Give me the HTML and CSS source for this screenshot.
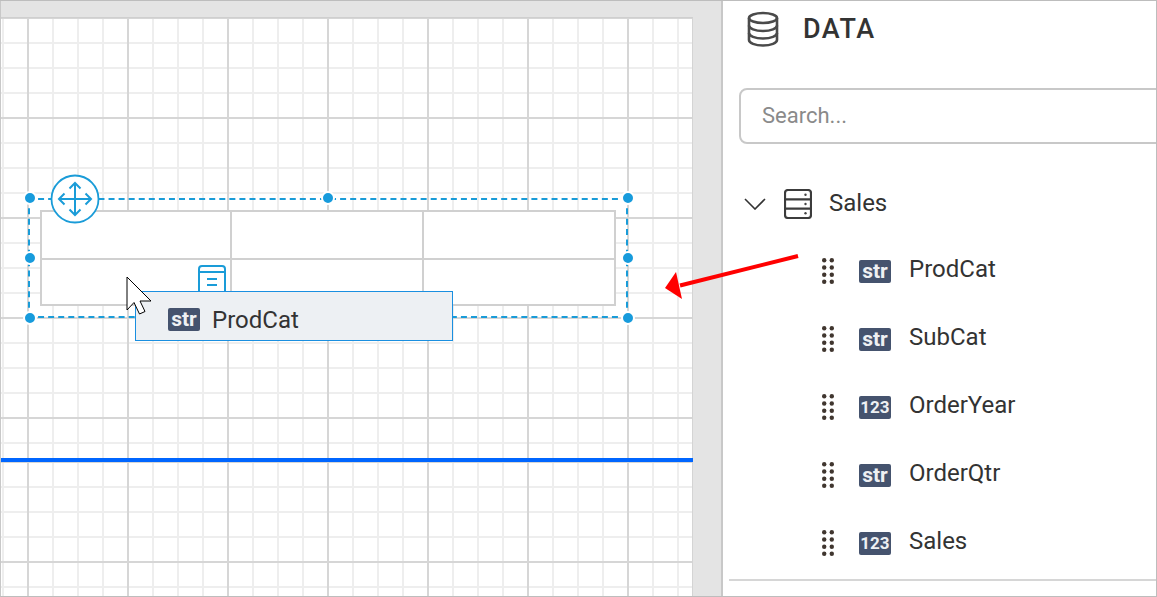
FILE: index.html
```html
<!DOCTYPE html>
<html lang="en">

<head>
    <meta charset="UTF-8">
    <meta name="viewport" content="width=device-width, initial-scale=1.0">
    <link rel="stylesheet" href="styles.css">
    <title>Report Designer</title>
</head>

<body>

    <svg class="defs" width="0" height="0">
        <symbol id="dots" viewBox="0 0 12 26">
            <circle cx="2.200" cy="2.200" r="2.200" />
            <circle cx="9.800" cy="2.200" r="2.200" />
            <circle cx="2.200" cy="9.500" r="2.200" />
            <circle cx="9.800" cy="9.500" r="2.200" />
            <circle cx="2.200" cy="16.700" r="2.200" />
            <circle cx="9.800" cy="16.700" r="2.200" />
            <circle cx="2.200" cy="23.800" r="2.200" />
            <circle cx="9.800" cy="23.800" r="2.200" />
        </symbol>
    </svg>

    <div class="frame">

        <div class="stage">
            <div class="canvas">
                <div class="band band-top"></div>
                <div class="band-line"></div>
                <div class="band band-bottom"></div>

                <!-- table item on the canvas -->
                <div class="selection"></div>
                <span class="handle h1"></span>
                <span class="handle h2"></span>
                <span class="handle h3"></span>
                <span class="handle h4"></span>
                <span class="handle h5"></span>
                <span class="handle h6"></span>
                <span class="handle h7"></span>

                <div class="table-item">
                    <div class="cell"></div>
                    <div class="cell"></div>
                    <div class="cell"></div>
                    <div class="cell"></div>
                    <div class="cell"></div>
                    <div class="cell"></div>
                </div>

                <svg class="move-icon" width="50" height="50" viewBox="0 0 50 50">
                    <circle cx="25" cy="25" r="23.500" fill="#fff" stroke="#1a9cd8" stroke-width="1.800" />
                    <path d="M25 9V41M9 25H41M19.500 14.500L25 9L30.500 14.500M19.500 35.500L25 41L30.500 35.500M14.500 19.500L9 25L14.500 30.500M35.500 19.500L41 25L35.500 30.500"
                        fill="none" stroke="#1a9cd8" stroke-width="2" />
                </svg>

                <svg class="cell-icon" width="28" height="30" viewBox="0 0 28 30">
                    <rect x="1" y="1" width="26" height="28" rx="3" fill="#fff" stroke="#1a9cd8" stroke-width="2" />
                    <path d="M1 7H27M9 14H19M9 20H19" fill="none" stroke="#1a9cd8" stroke-width="2" />
                </svg>

                <div class="drag-chip">
                    <span class="badge chip-badge">str</span>
                    <span>ProdCat</span>
                </div>

                <svg class="cursor" width="28" height="40" viewBox="0 0 28 40">
                    <path d="M1 1V34L8 26.500L13.500 38L19 35.500L14 25H25Z" fill="#fff" stroke="#000" stroke-width="1" />
                </svg>
            </div>
        </div>

        <div class="panel">
            <div class="panel-head">
                <svg width="32" height="36" viewBox="0 0 32 36">
                    <g fill="none" stroke="#4a4a4a" stroke-width="2.600">
                        <ellipse cx="16" cy="7" rx="14" ry="5" />
                        <path d="M2 7V29C2 32 8 34.500 16 34.500C24 34.500 30 32 30 29V7" />
                        <path d="M2 14.500C2 17.500 8 20 16 20C24 20 30 17.500 30 14.500" />
                        <path d="M2 22C2 25 8 27.500 16 27.500C24 27.500 30 25 30 22" />
                    </g>
                </svg>
                <span class="panel-title">DATA</span>
            </div>

            <input class="search" type="text" placeholder="Search...">

            <div class="tree-root">
                <svg class="chevron" width="22" height="12" viewBox="0 0 22 12">
                    <path d="M1 1L11 11L21 1" fill="none" stroke="#333" stroke-width="1.600" />
                </svg>
                <svg class="server" width="28" height="30" viewBox="0 0 28 30">
                    <rect x="1" y="1" width="26" height="28" rx="3" fill="none" stroke="#3c3c3c" stroke-width="2.200" />
                    <path d="M1 10.300H27M1 19.600H27" fill="none" stroke="#3c3c3c" stroke-width="2.200" />
                    <circle cx="21.500" cy="5.700" r="1.200" fill="#444" />
                    <circle cx="21.500" cy="15" r="1.200" fill="#444" />
                    <circle cx="21.500" cy="24.300" r="1.200" fill="#444" />
                </svg>
                <span class="field-name">Sales</span>
            </div>

            <ul class="fields">
                <li class="field">
                    <svg class="dots" width="12" height="26"><use href="#dots" /></svg>
                    <span class="badge">str</span>
                    <span class="field-name">ProdCat</span>
                </li>
                <li class="field">
                    <svg class="dots" width="12" height="26"><use href="#dots" /></svg>
                    <span class="badge">str</span>
                    <span class="field-name">SubCat</span>
                </li>
                <li class="field">
                    <svg class="dots" width="12" height="26"><use href="#dots" /></svg>
                    <span class="badge num">123</span>
                    <span class="field-name">OrderYear</span>
                </li>
                <li class="field">
                    <svg class="dots" width="12" height="26"><use href="#dots" /></svg>
                    <span class="badge">str</span>
                    <span class="field-name">OrderQtr</span>
                </li>
                <li class="field">
                    <svg class="dots" width="12" height="26"><use href="#dots" /></svg>
                    <span class="badge num">123</span>
                    <span class="field-name">Sales</span>
                </li>
            </ul>

            <div class="panel-rule"></div>
        </div>
    </div>

    <!-- annotation arrow -->
    <svg class="red-arrow" width="140" height="50" viewBox="0 0 140 50">
        <path d="M138 2L20 31.500" fill="none" stroke="#f00" stroke-width="4" />
        <path d="M5 34L16 18L22 45Z" fill="#f00" />
    </svg>

</body>

</html>
```

FILE: styles.css
```css
* {
    box-sizing: border-box;
}

body {
    margin: 0;
    position: relative;
    width: 1157px;
    height: 597px;
    overflow: hidden;
    font-family: Roboto, "Liberation Sans", sans-serif;
    color: #333;
}

.defs {
    position: absolute;
}

.frame {
    display: flex;
    width: 1157px;
    height: 597px;
    border: 1px solid #bdbdbd;
    border-left-width: 0;
}

/* left side */
.stage {
    width: 721px;
    flex: none;
    padding-top: 16px;
    background: #e4e4e4;
    border-left: 1px solid #c8c8c8;
}

.canvas {
    position: relative;
    width: 692px;
    height: 579px;
    display: flex;
    flex-direction: column;
    background: #fff;
    border-top: 1px solid #cfcfcf;
    border-right: 1px solid #d4d4d4;
}

.band {
    background-color: #fff;
    background-image:
        linear-gradient(to right, #d6d6d6 2px, transparent 2px),
        linear-gradient(to bottom, #d6d6d6 2px, transparent 2px),
        linear-gradient(to right, #eeeeee 2px, transparent 2px),
        linear-gradient(to bottom, #eeeeee 2px, transparent 2px);
    background-size: 100px 100px, 100px 100px, 25px 25px, 25px 25px;
    background-position: 26px -1px, 26px -1px, 1px -1px, 1px -1px;
}

.band-top {
    height: 440px;
}

.band-line {
    height: 4px;
    flex: none;
    margin-right: -1px;
    background: #0066ff;
}

.band-bottom {
    flex: 1;
}

.selection {
    position: absolute;
    left: 27px;
    top: 180px;
    width: 600px;
    height: 120px;
    border: 2px dashed #1a9cd8;
}

.handle {
    position: absolute;
    width: 14px;
    height: 14px;
    border-radius: 50%;
    background: #179bdc;
    border: 2px solid #fff;
}

.h1 { left: 22px; top: 173px; }
.h2 { left: 320px; top: 173px; }
.h3 { left: 620px; top: 173px; }
.h4 { left: 22px; top: 233px; }
.h5 { left: 620px; top: 233px; }
.h6 { left: 22px; top: 293px; }
.h7 { left: 620px; top: 293px; }

.table-item {
    position: absolute;
    left: 39px;
    top: 192px;
    width: 576px;
    height: 96px;
    display: grid;
    grid-template-columns: 190px 192px 1fr;
    grid-template-rows: 48px 1fr;
    background: #fff;
    border: 2px solid #d0d0d0;
}

.cell {
    border-right: 2px solid #d0d0d0;
    border-bottom: 2px solid #d0d0d0;
}

.cell:nth-child(3n) {
    border-right: 0;
}

.cell:nth-child(n+4) {
    border-bottom: 0;
}

.move-icon {
    position: absolute;
    left: 49px;
    top: 156px;
}

.cell-icon {
    position: absolute;
    left: 197px;
    top: 247px;
}

.drag-chip {
    position: absolute;
    left: 134px;
    top: 273px;
    width: 318px;
    height: 50px;
    display: flex;
    align-items: center;
    gap: 12px;
    padding-left: 32px;
    padding-top: 7px;
    font-size: 24px;
    background: #edf0f3;
    border: 1px solid #1a8fe0;
}

.cursor {
    position: absolute;
    left: 125px;
    top: 258px;
}

/* right side */
.panel {
    flex: 1;
    min-width: 0;
    overflow: hidden;
    background: #fff;
    border-left: 2px solid #c8c8c8;
}

.panel-head {
    display: flex;
    align-items: center;
    gap: 24px;
    height: 55px;
    padding-left: 24px;
}

.panel-title {
    font-size: 27px;
    font-weight: 500;
    letter-spacing: 1.500px;
}

.search {
    display: block;
    width: 470px;
    height: 56px;
    margin: 32px 0 0 16px;
    padding: 0 21px 2px;
    font: 22px Roboto, sans-serif;
    background: #fff;
    border: 2px solid #c8c8c8;
    border-radius: 8px;
}

.search::placeholder {
    color: #8a8a8a;
    opacity: 1;
}

.tree-root {
    display: flex;
    align-items: center;
    height: 66px;
    margin-top: 26px;
    padding-left: 21px;
}

.chevron {
    margin-top: 2px;
}

.server {
    margin: 2px 17px 0 18px;
}

.field-name {
    font-size: 24px;
    color: #333;
}

.fields {
    margin: 0;
    padding: 0;
    list-style: none;
}

.field {
    display: flex;
    align-items: center;
    height: 68px;
    padding-left: 99px;
}

.field .field-name {
    margin-bottom: 2px;
}

.dots {
    fill: #40362f;
    margin-top: 2px;
    margin-right: 25px;
}

.badge {
    display: inline-flex;
    align-items: center;
    justify-content: center;
    width: 32px;
    height: 23px;
    margin-right: 18px;
    margin-top: 3px;
    font-size: 21px;
    font-weight: 700;
    line-height: 1;
    color: #eef0f3;
    background: #45536e;
    border-radius: 2px;
}

.badge.num {
    font-size: 17px;
}

.chip-badge {
    margin: 0;
}

.panel-rule {
    height: 2px;
    margin: 3px 0 0 6px;
    background: #d6d6d6;
}

.red-arrow {
    position: absolute;
    left: 660px;
    top: 254px;
}
```
